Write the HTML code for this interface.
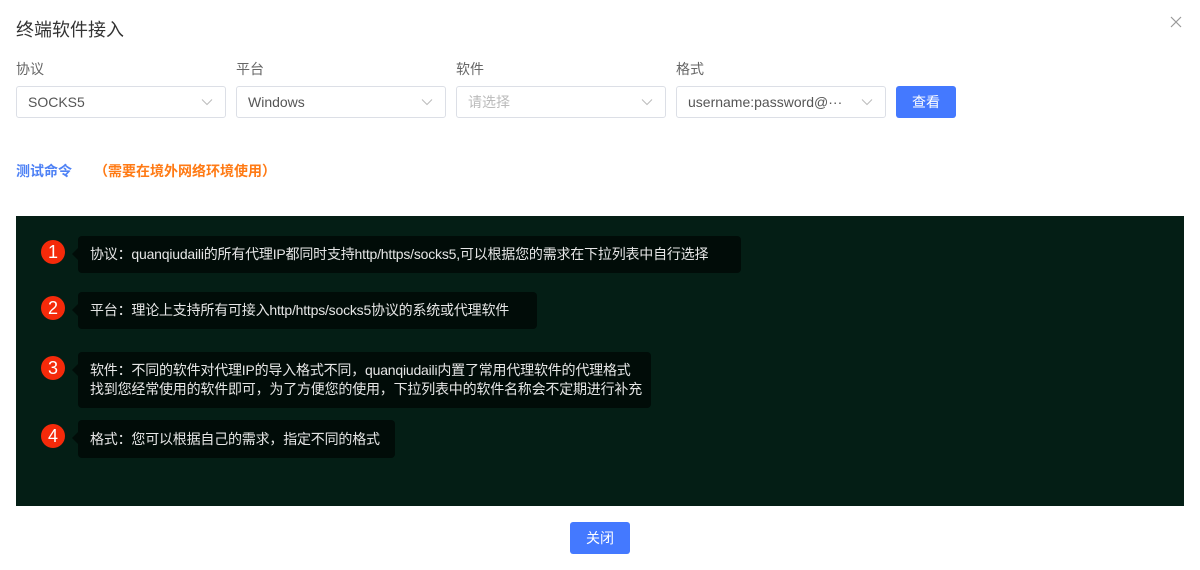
<!DOCTYPE html>
<html><head><meta charset="utf-8"><style>
*{box-sizing:border-box;margin:0;padding:0}
body{width:1200px;height:570px;background:#fff;font-family:"Liberation Sans","Noto Sans CJK SC",sans-serif;position:relative;overflow:hidden;color:#333}
.a{position:absolute}
.title{left:16px;top:16px;font-size:18px;color:#333}
.lbl{top:59px;font-size:14px;color:#666}
.sel{top:86px;width:210px;height:32px;border:1px solid #dcdfe6;border-radius:3px;font-size:14px;color:#555;padding:0 11px;line-height:30px}
.sel svg{position:absolute;right:12px;top:11px}
.btn{background:#4479ff;color:#fff;border-radius:3px;font-size:14px;text-align:center}
.panel{left:16px;top:216px;width:1168px;height:290px;background:#041e15}
.b{left:78px;background:#010c08;border-radius:4px;color:#e6e6e6;font-size:14px;padding:0 12px;line-height:19px;display:flex;flex-direction:column;justify-content:center;white-space:nowrap;letter-spacing:-0.2px}
.b:before{content:"";position:absolute;left:-6px;top:12px;border:6px solid transparent;border-left:0;border-right-color:#010c08}
.n{left:41px;width:24px;height:24px;border-radius:50%;background:#f52a0a;color:#fff;font-size:18px;text-align:center;line-height:24px}
</style></head><body>
<div class="a title">终端软件接入</div>
<svg class="a" style="left:1170px;top:16px" width="12" height="12" viewBox="0 0 12 12"><path d="M1 1L11 11M11 1L1 11" stroke="#999" stroke-width="1.2"/></svg>
<div class="a lbl" style="left:16px">协议</div>
<div class="a lbl" style="left:236px">平台</div>
<div class="a lbl" style="left:456px">软件</div>
<div class="a lbl" style="left:676px">格式</div>
<div class="a sel" style="left:16px">SOCKS5<svg width="12" height="8" viewBox="0 0 12 8"><path d="M1 1.5L6 6.5L11 1.5" stroke="#bbb" fill="none"/></svg></div>
<div class="a sel" style="left:236px">Windows<svg width="12" height="8" viewBox="0 0 12 8"><path d="M1 1.5L6 6.5L11 1.5" stroke="#bbb" fill="none"/></svg></div>
<div class="a sel" style="left:456px;color:#bbb">请选择<svg width="12" height="8" viewBox="0 0 12 8"><path d="M1 1.5L6 6.5L11 1.5" stroke="#bbb" fill="none"/></svg></div>
<div class="a sel" style="left:676px">username:password@···<svg width="12" height="8" viewBox="0 0 12 8"><path d="M1 1.5L6 6.5L11 1.5" stroke="#bbb" fill="none"/></svg></div>
<div class="a btn" style="left:896px;top:86px;width:60px;height:32px;line-height:32px">查看</div>
<div class="a" style="left:16px;top:161px;font-size:14px;font-weight:bold;color:#4f82f5">测试命令</div>
<div class="a" style="left:94px;top:161px;font-size:14px;font-weight:bold;color:#ff7a14">（需要在境外网络环境使用）</div>
<div class="a panel"></div>
<div class="a n" style="top:240px">1</div>
<div class="a b" style="top:236px;width:663px;height:37px">协议：quanqiudaili的所有代理IP都同时支持http/https/socks5,可以根据您的需求在下拉列表中自行选择</div>
<div class="a n" style="top:296px">2</div>
<div class="a b" style="top:292px;width:459px;height:37px">平台：理论上支持所有可接入http/https/socks5协议的系统或代理软件</div>
<div class="a n" style="top:356px">3</div>
<div class="a b" style="top:352px;width:573px;height:56px"><div>软件：不同的软件对代理IP的导入格式不同，quanqiudaili内置了常用代理软件的代理格式</div><div>找到您经常使用的软件即可，为了方便您的使用，下拉列表中的软件名称会不定期进行补充</div></div>
<div class="a n" style="top:424px">4</div>
<div class="a b" style="top:420px;width:317px;height:38px">格式：您可以根据自己的需求，指定不同的格式</div>
<div class="a btn" style="left:570px;top:522px;width:60px;height:32px;line-height:32px">关闭</div>
</body></html>
